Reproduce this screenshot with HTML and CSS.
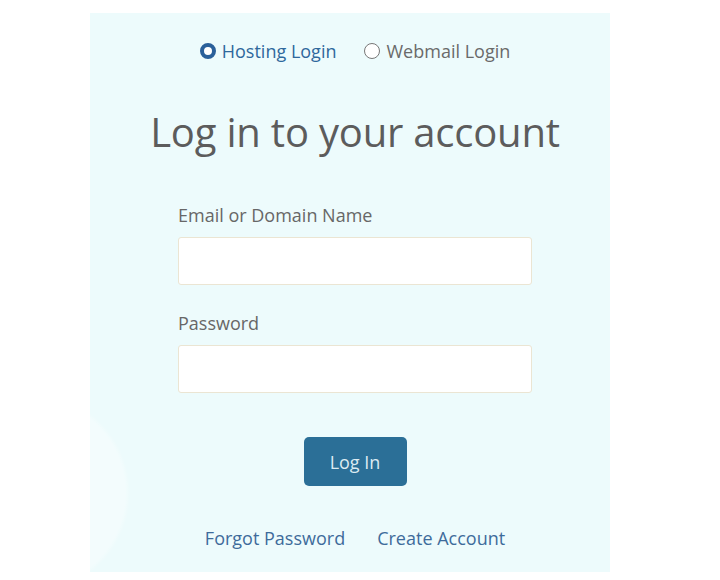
FILE: index.html
```html
<!DOCTYPE html>
<html lang="en">
<head>
    <meta charset="UTF-8">
    <title>Log in to your account</title>
    <link rel="stylesheet" href="styles.css">
</head>
<body>
    <div class="login-panel">
        <div class="login-type">
            <label class="type-option active">
                <span class="radio"></span>Hosting Login
            </label>
            <label class="type-option">
                <span class="radio"></span>Webmail Login
            </label>
        </div>

        <h1>Log in to your account</h1>

        <form class="login-form" onsubmit="return false;">
            <label class="field-label" for="user">Email or Domain Name</label>
            <input type="text" id="user" class="field">

            <label class="field-label" for="pass">Password</label>
            <input type="password" id="pass" class="field">

            <div class="actions">
                <button type="submit">Log In</button>
            </div>
        </form>

        <div class="links">
            <a href="#">Forgot Password</a>
            <a href="#">Create Account</a>
        </div>
    </div>
</body>
</html>
```

FILE: styles.css
```css
body {
    font-family: 'Open Sans', 'Noto Sans', sans-serif;
    margin: 0;
    background-color: #fff;
}

.login-panel {
    margin: 13px 0 0 90px;
    width: 520px;
    height: 559px;
    box-sizing: border-box;
    padding: 26px 0 0 10px;
    display: flex;
    flex-direction: column;
    align-items: center;
    background-color: #edfbfc;
    background-image:
        radial-gradient(circle at -60px 480px, rgba(255, 255, 255, 0.35) 0, rgba(255, 255, 255, 0.35) 95px, rgba(255, 255, 255, 0) 100px);
}

.login-type {
    display: flex;
    gap: 28px;
    font-size: 18px;
    line-height: 24px;
}

.type-option {
    display: flex;
    align-items: center;
    color: #6a6a6a;
    cursor: pointer;
}

.type-option .radio {
    width: 16px;
    height: 16px;
    border: 1px solid #777;
    border-radius: 50%;
    box-sizing: border-box;
    margin-right: 6px;
    background-color: #fff;
}

.type-option.active {
    color: #2f689c;
}

.type-option.active .radio {
    border: 4px solid #2a609a;
}

h1 {
    margin: 42px 0 0;
    font-size: 40px;
    line-height: 54px;
    font-weight: 400;
    color: #5c5c5c;
    letter-spacing: -0.2px;
}

.login-form {
    width: 354px;
    margin-top: 44px;
    display: flex;
    flex-direction: column;
}

.field-label {
    font-size: 18px;
    line-height: 24px;
    color: #676767;
    margin-bottom: 10px;
}

.field {
    height: 48px;
    box-sizing: border-box;
    border: 1px solid #ebe5d3;
    border-radius: 3px;
    background-color: #fff;
    margin-bottom: 26px;
    font-size: 16px;
    padding: 0 10px;
}

.actions {
    display: flex;
    justify-content: center;
    margin-top: 18px;
}

button {
    width: 103px;
    height: 49px;
    font-family: inherit;
    font-size: 18px;
    color: #dcebf2;
    background-color: #2b6f97;
    border: none;
    border-radius: 5px;
    cursor: pointer;
}

.links {
    display: flex;
    gap: 32px;
    margin-top: 40px;
    font-size: 18px;
}

.links a {
    color: #3e6b9b;
    text-decoration: none;
}
```
